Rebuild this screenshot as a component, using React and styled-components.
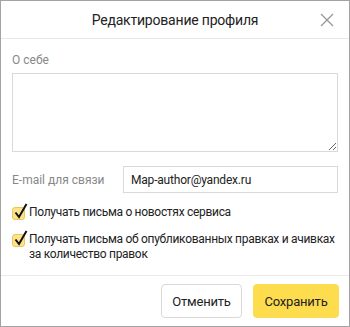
import React, { useState } from 'react';
import styled, { createGlobalStyle } from 'styled-components';

const GlobalStyle = createGlobalStyle`
  html, body {
    margin: 0;
    padding: 0;
    background: #fff;
  }
  body {
    font-family: Roboto, "Noto Sans", Arial, sans-serif;
    color: #222;
  }
`;

const Modal = styled.div`
  box-sizing: border-box;
  width: 350px;
  height: 327px;
  border: 1px solid #a3a3a3;
  background: #fff;
  display: flex;
  flex-direction: column;
`;

const Header = styled.div`
  height: 37px;
  border-bottom: 1px solid #e8e8e8;
  display: flex;
  align-items: center;
  justify-content: center;
  position: relative;
`;

const Title = styled.h1`
  margin: 0;
  font-size: 14px;
  letter-spacing: -0.2px;
  font-weight: 400;
  color: #222;
`;

const Close = styled.button`
  position: absolute;
  right: 14px;
  top: 11px;
  width: 16px;
  height: 16px;
  padding: 0;
  border: none;
  background: none;
  cursor: pointer;
  display: flex;
  align-items: center;
  justify-content: center;
`;

const Body = styled.div`
  flex: 1;
  padding: 14px 11px 0 11px;
  display: flex;
  flex-direction: column;
`;

const Label = styled.label`
  font-size: 12px;
  color: #888;
`;

const TextArea = styled.textarea`
  box-sizing: border-box;
  margin-top: 6px;
  width: 326px;
  height: 79px;
  border: 1px solid #d9d9d9;
  resize: vertical;
  font-family: inherit;
  font-size: 13px;
  outline: none;
`;

const Row = styled.div`
  display: flex;
  align-items: center;
  margin-top: 14px;
`;

const RowLabel = styled(Label)`
  width: 111px;
`;

const Input = styled.input`
  box-sizing: border-box;
  width: 215px;
  height: 27px;
  border: 1px solid #d9d9d9;
  padding: 0 7px;
  font-family: inherit;
  font-size: 12px;
  letter-spacing: -0.2px;
  color: #222;
  outline: none;
`;

const Check = styled.label`
  display: flex;
  align-items: flex-start;
  gap: 4px;
  margin-top: ${p => p.$top}px;
  font-size: 12px;
  letter-spacing: -0.3px;
  line-height: 15px;
  color: #222;
  cursor: pointer;
`;

const Box = styled.span`
  position: relative;
  flex: none;
  width: 13px;
  height: 13px;
  margin-top: 2px;
  border-radius: 3px;
  background: #fde28a;
  border: 1px solid #e9c85a;
  box-sizing: border-box;

  svg {
    position: absolute;
    left: 1px;
    top: -5px;
  }
`;

const Footer = styled.div`
  border-top: 1px solid #ebebeb;
  height: 50px;
  display: flex;
  align-items: center;
  justify-content: flex-end;
  gap: 11px;
  padding: 0 10px;
`;

const Button = styled.button`
  box-sizing: border-box;
  height: 34px;
  width: ${p => (p.$primary ? 86 : 81)}px;
  padding: 0;
  border-radius: 4px;
  border: 1px solid ${p => (p.$primary ? '#fddc4d' : '#d9d9d9')};
  background: ${p => (p.$primary ? '#fddc4d' : '#fff')};
  font-family: inherit;
  font-size: 13px;
  letter-spacing: -0.2px;
  color: #222;
  cursor: pointer;
`;

const Tick = () => (
  <svg width="14" height="16" viewBox="0 0 14 16">
    <path d="M1.5 9.5 L5 14 L12.5 1" fill="none" stroke="#111" strokeWidth="2" />
  </svg>
);

const CheckItem = ({ top, children }) => {
  const [on, setOn] = useState(true);
  return (
    <Check $top={top} onClick={() => setOn(!on)}>
      <Box>{on && <Tick />}</Box>
      <span>{children}</span>
    </Check>
  );
};

export default function App() {
  const [email, setEmail] = useState('Map-author@yandex.ru');
  return (
    <>
      <GlobalStyle />
      <Modal>
        <Header>
          <Title>Редактирование профиля</Title>
          <Close aria-label="Закрыть">
            <svg width="14" height="14" viewBox="0 0 14 14">
              <path d="M1 1 L13 13 M13 1 L1 13" stroke="#999" strokeWidth="1.4" />
            </svg>
          </Close>
        </Header>
        <Body>
          <Label>О себе</Label>
          <TextArea />
          <Row>
            <RowLabel>E-mail для связи</RowLabel>
            <Input value={email} onChange={e => setEmail(e.target.value)} />
          </Row>
          <CheckItem top={12}>Получать письма о новостях сервиса</CheckItem>
          <CheckItem top={12}>
            Получать письма об опубликованных правках и ачивках за количество правок
          </CheckItem>
        </Body>
        <Footer>
          <Button>Отменить</Button>
          <Button $primary>Сохранить</Button>
        </Footer>
      </Modal>
    </>
  );
}
